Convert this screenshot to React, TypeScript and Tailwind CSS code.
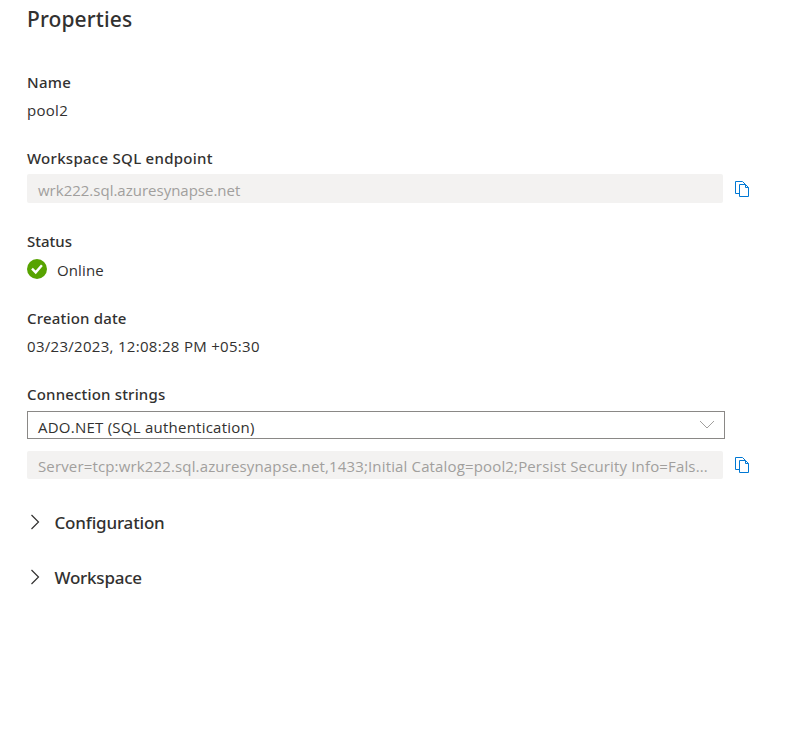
import type { ReactNode } from "react";

function CopyIcon() {
  return (
    <svg width="16" height="18" viewBox="0 0 16 18" fill="none" stroke="#0078d4">
      <path d="M4.5 13.5H0.5V1.5H7.5L10.5 4.5" />
      <path d="M4.5 4.5H10.5L13.5 7.5V16.5H4.5Z" />
      <path d="M10.5 4.5V7.5H13.5" />
    </svg>
  );
}

function CheckIcon() {
  return (
    <svg width="20" height="20" viewBox="0 0 20 20">
      <circle cx="10" cy="10" r="10" fill="#57a300" />
      <path d="M5 9.7L8.7 13.4L14.9 6.3" fill="none" stroke="#fff" strokeWidth="2.4" />
    </svg>
  );
}

function Label({ children, className }: { children: ReactNode; className: string }) {
  return <div className={`h-5 font-['Noto_Sans',sans-serif] text-[15px] leading-5 font-medium ${className}`}>{children}</div>;
}

function ReadOnlyField({ children, className }: { children: ReactNode; className: string }) {
  return (
    <div className="flex items-end gap-3">
      <div className={`w-[696px] overflow-hidden rounded-[2px] bg-[#f3f2f1] pl-[11px] whitespace-nowrap text-[#a19f9d] ${className}`}>
        {children}
      </div>
      <button type="button" aria-label="Copy" className="mb-[5px] h-[18px]">
        <CopyIcon />
      </button>
    </div>
  );
}

function Section({ title, className }: { title: string; className: string }) {
  return (
    <div className={`flex h-6 items-center font-['Noto_Sans',sans-serif] text-[17px] leading-6 font-medium ${className}`}>
      <svg width="16" height="16" viewBox="0 0 16 16" fill="none" stroke="#323130" strokeWidth="1.2" className="mr-[11.5px] -mt-0.5">
        <path d="M4.5 1L11.5 8L4.5 15" />
      </svg>
      {title}
    </div>
  );
}

export default function App() {
  return (
    <main className="flex h-[730px] flex-col overflow-hidden bg-white pl-[27px] font-['Open_Sans',sans-serif] text-[15px] leading-5 text-[#323130]">
      <h1 className="mt-1 h-[30px] font-['Noto_Sans',sans-serif] text-[21px] leading-[30px] font-medium tracking-[0.12px]">Properties</h1>

      <Label className="mt-[38px] tracking-[0.3px]">Name</Label>
      <div className="mt-2 h-5 tracking-[0.3px]">pool2</div>

      <Label className="mt-7 tracking-[0.28px]">Workspace SQL endpoint</Label>
      <div className="mt-1.5">
        <ReadOnlyField className="h-[29px] pt-1.5">wrk222.sql.azuresynapse.net</ReadOnlyField>
      </div>

      <Label className="mt-7">Status</Label>
      <div className="mt-2 flex h-[21px] items-start gap-2.5">
        <CheckIcon />
        <span className="pt-px tracking-[0.12px]">Online</span>
      </div>

      <Label className="mt-7 tracking-[0.18px]">Creation date</Label>
      <div className="mt-2 h-5 tracking-[0.3px]">03/23/2023, 12:08:28 PM +05:30</div>

      <Label className="mt-7 tracking-[0.18px]">Connection strings</Label>
      <div className="mt-[7px] flex h-7 w-[698px] justify-between border border-[#8a8886] pr-2.5 pl-2.5">
        <span className="pt-[5px] tracking-[0.24px]">ADO.NET (SQL authentication)</span>
        <svg width="14" height="14" viewBox="0 0 14 14" fill="none" stroke="#a19f9d" className="mt-[5px]">
          <path d="M0 4L7 11L14 4" />
        </svg>
      </div>
      <div className="mt-3">
        <ReadOnlyField className="h-7 pt-[5px] tracking-[0.148px]">
          Server=tcp:wrk222.sql.azuresynapse.net,1433;Initial Catalog=pool2;Persist Security Info=Fals...
        </ReadOnlyField>
      </div>

      <Section title="Configuration" className="mt-8 tracking-[-0.18px]" />
      <Section title="Workspace" className="mt-[31px] tracking-[-0.22px]" />
    </main>
  );
}
